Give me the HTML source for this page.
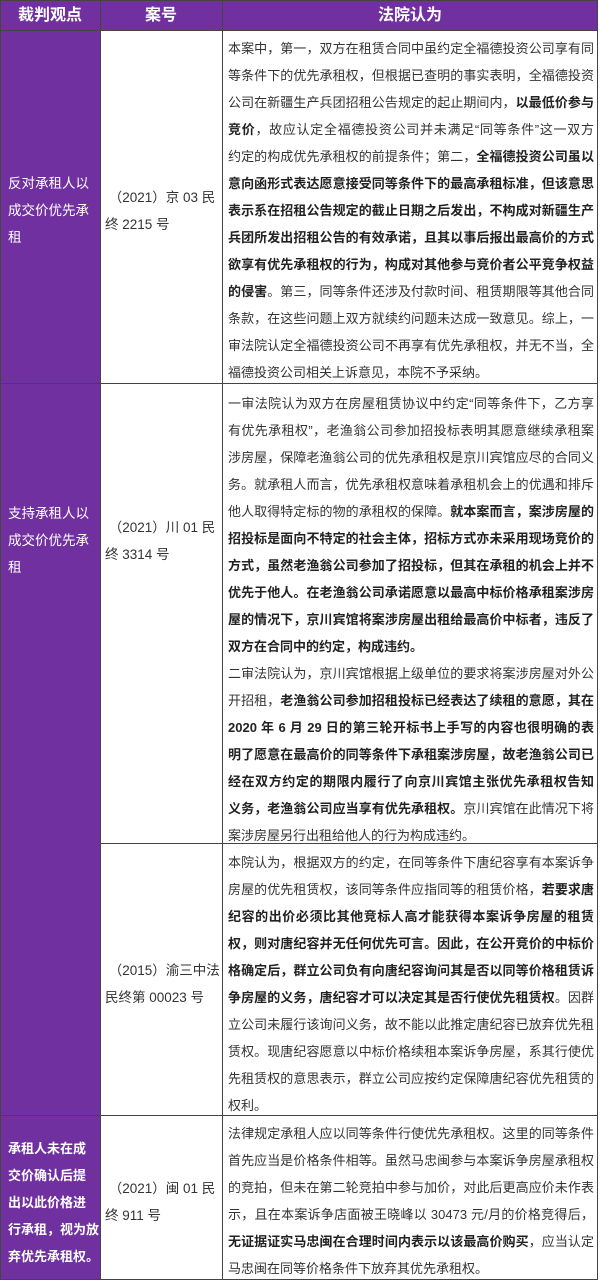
<!DOCTYPE html>
<html><head><meta charset="utf-8"><style>
*{margin:0;padding:0;box-sizing:border-box}
body{width:600px;height:1283px;background:#fff;position:relative;overflow:hidden;font-family:"Liberation Sans","Noto Sans CJK SC",sans-serif;color:#333}
.a{position:absolute}
.p{background:#7030a0}
.h{background:#444}
.hd{position:absolute;top:0;height:30px;line-height:31px;color:#fff;font-weight:bold;font-size:16px;text-align:center}
.c1{position:absolute;left:8px;width:92px;color:#fff;font-size:13.5px;line-height:27px;white-space:nowrap}
.c2{position:absolute;left:105px;width:115px;font-size:13.5px;line-height:27px;white-space:nowrap;color:#333}
.c3{position:absolute;left:228px;width:366px;font-size:13px;line-height:27px}
.c3 div{white-space:nowrap;text-align:justify;text-align-last:justify;height:27px}
.c3 div.l{text-align-last:left}
b{color:#222}
</style></head><body>
<div class="a p" style="left:0;top:0;width:598px;height:30px"></div>
<div class="a p" style="left:0;top:30px;width:100px;height:1250px"></div>
<div class="hd" style="left:0;width:100px">裁判观点</div>
<div class="hd" style="left:100px;width:122px">案号</div>
<div class="hd" style="left:222px;width:376px">法院认为</div>

<div class="a h" style="left:0;top:0;width:1px;height:1280px"></div>
<div class="a h" style="left:100px;top:0;width:1px;height:1280px"></div>
<div class="a h" style="left:222px;top:0;width:1px;height:1280px"></div>
<div class="a h" style="left:597px;top:0;width:1px;height:1280px"></div>
<div class="a h" style="left:0;top:0;width:598px;height:1px"></div>
<div class="a h" style="left:0;top:30px;width:598px;height:1px"></div>
<div class="a h" style="left:0;top:383px;width:598px;height:1px"></div>
<div class="a h" style="left:100px;top:843px;width:498px;height:1px"></div>
<div class="a h" style="left:0;top:1115px;width:598px;height:1px"></div>
<div class="a h" style="left:0;top:1279px;width:598px;height:1px"></div>

<div class="c1" style="top:169.5px">反对承租人以<br>成交价优先承<br>租</div>
<div class="c1" style="top:499.5px">支持承租人以<br>成交价优先承<br>租</div>
<div class="c1" style="top:1134.5px;font-weight:bold;font-size:13px">承租人未在成<br>交价确认后提<br>出以此价格进<br>行承租，视为放<br>弃优先承租权。</div>

<div class="c2" style="top:183.5px">&nbsp;（2021）京 03 民<br>终 2215 号</div>
<div class="c2" style="top:513.5px">&nbsp;（2021）川 01 民<br>终 3314 号</div>
<div class="c2" style="top:956.5px">&nbsp;（2015）渝三中法<br>民终第 00023 号</div>
<div class="c2" style="top:1174.5px">&nbsp;（2021）闽 01 民<br>终 911 号</div>

<div class="c3" style="top:34.5px">
<div>本案中，第一，双方在租赁合同中虽约定全福德投资公司享有同</div>
<div>等条件下的优先承租权，但根据已查明的事实表明，全福德投资</div>
<div>公司在新疆生产兵团招租公告规定的起止期间内，<b>以最低价参与</b></div>
<div><b>竞价</b>，故应认定全福德投资公司并未满足“同等条件”这一双方</div>
<div>约定的构成优先承租权的前提条件；第二，<b>全福德投资公司虽以</b></div>
<div><b>意向函形式表达愿意接受同等条件下的最高承租标准，但该意思</b></div>
<div><b>表示系在招租公告规定的截止日期之后发出，不构成对新疆生产</b></div>
<div><b>兵团所发出招租公告的有效承诺，且其以事后报出最高价的方式</b></div>
<div><b>欲享有优先承租权的行为，构成对其他参与竞价者公平竞争权益</b></div>
<div><b>的侵害</b>。第三，同等条件还涉及付款时间、租赁期限等其他合同</div>
<div>条款，在这些问题上双方就续约问题未达成一致意见。综上，一</div>
<div>审法院认定全福德投资公司不再享有优先承租权，并无不当，全</div>
<div class="l">福德投资公司相关上诉意见，本院不予采纳。</div>
</div>

<div class="c3" style="top:389.5px">
<div>一审法院认为双方在房屋租赁协议中约定“同等条件下，乙方享</div>
<div>有优先承租权”，老渔翁公司参加招投标表明其愿意继续承租案</div>
<div>涉房屋，保障老渔翁公司的优先承租权是京川宾馆应尽的合同义</div>
<div>务。就承租人而言，优先承租权意味着承租机会上的优遇和排斥</div>
<div>他人取得特定标的物的承租权的保障。<b>就本案而言，案涉房屋的</b></div>
<div><b>招投标是面向不特定的社会主体，招标方式亦未采用现场竞价的</b></div>
<div><b>方式，虽然老渔翁公司参加了招投标，但其在承租的机会上并不</b></div>
<div><b>优先于他人。在老渔翁公司承诺愿意以最高中标价格承租案涉房</b></div>
<div><b>屋的情况下，京川宾馆将案涉房屋出租给最高价中标者，违反了</b></div>
<div class="l"><b>双方在合同中的约定，构成违约。</b></div>
<div>二审法院认为，京川宾馆根据上级单位的要求将案涉房屋对外公</div>
<div>开招租，<b>老渔翁公司参加招租投标已经表达了续租的意愿，其在</b></div>
<div><b>2020 年 6 月 29 日的第三轮开标书上手写的内容也很明确的表</b></div>
<div><b>明了愿意在最高价的同等条件下承租案涉房屋，故老渔翁公司已</b></div>
<div><b>经在双方约定的期限内履行了向京川宾馆主张优先承租权告知</b></div>
<div><b>义务，老渔翁公司应当享有优先承租权。</b>京川宾馆在此情况下将</div>
<div class="l">案涉房屋另行出租给他人的行为构成违约。</div>
</div>

<div class="c3" style="top:848.5px">
<div>本院认为，根据双方的约定，在同等条件下唐纪容享有本案诉争</div>
<div>房屋的优先租赁权，该同等条件应指同等的租赁价格，<b>若要求唐</b></div>
<div><b>纪容的出价必须比其他竞标人高才能获得本案诉争房屋的租赁</b></div>
<div><b>权，则对唐纪容并无任何优先可言。因此，在公开竞价的中标价</b></div>
<div><b>格确定后，群立公司负有向唐纪容询问其是否以同等价格租赁诉</b></div>
<div><b>争房屋的义务，唐纪容才可以决定其是否行使优先租赁权</b>。因群</div>
<div>立公司未履行该询问义务，故不能以此推定唐纪容已放弃优先租</div>
<div>赁权。现唐纪容愿意以中标价格续租本案诉争房屋，系其行使优</div>
<div>先租赁权的意思表示，群立公司应按约定保障唐纪容优先租赁的</div>
<div class="l">权利。</div>
</div>

<div class="c3" style="top:1119.5px">
<div>法律规定承租人应以同等条件行使优先承租权。这里的同等条件</div>
<div>首先应当是价格条件相等。虽然马忠闽参与本案诉争房屋承租权</div>
<div>的竞拍，但未在第二轮竞拍中参与加价，对此后更高应价未作表</div>
<div>示，且在本案诉争店面被王晓峰以 30473 元/月的价格竞得后，</div>
<div><b>无证据证实马忠闽在合理时间内表示以该最高价购买</b>，应当认定</div>
<div class="l">马忠闽在同等价格条件下放弃其优先承租权。</div>
</div>
</body></html>
